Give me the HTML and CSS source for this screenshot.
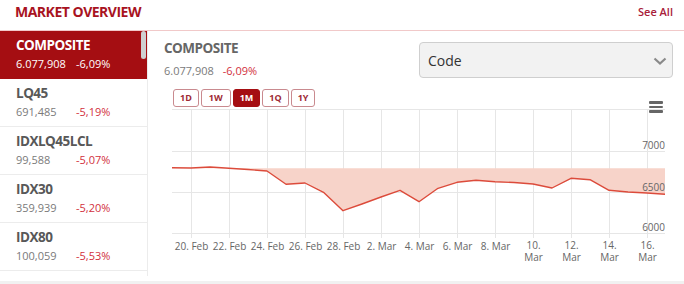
FILE: index.html
```html
<!DOCTYPE html>
<html>
<head>
<meta charset="utf-8">
<link rel="stylesheet" href="styles.css">
</head>
<body>
<div class="widget">
  <div class="header">
    <h2 class="title">MARKET OVERVIEW</h2>
    <a class="see-all">See All</a>
  </div>
  <div class="body">
    <aside class="list">
      <div class="item active">
        <div class="name">COMPOSITE</div>
        <div class="vals"><span class="val">6.077,908</span><span class="pct">-6,09%</span></div>
      </div>
      <div class="item">
        <div class="name">LQ45</div>
        <div class="vals"><span class="val">691,485</span><span class="pct">-5,19%</span></div>
      </div>
      <div class="item">
        <div class="name">IDXLQ45LCL</div>
        <div class="vals"><span class="val">99,588</span><span class="pct">-5,07%</span></div>
      </div>
      <div class="item">
        <div class="name">IDX30</div>
        <div class="vals"><span class="val">359,939</span><span class="pct">-5,20%</span></div>
      </div>
      <div class="item">
        <div class="name">IDX80</div>
        <div class="vals"><span class="val">100,059</span><span class="pct">-5,53%</span></div>
      </div>
      <div class="thumb"></div>
    </aside>
    <section class="detail">
      <div class="detail-head">
        <div class="info">
          <div class="d-name">COMPOSITE</div>
          <div class="d-vals"><span class="d-val">6.077,908</span><span class="d-pct">-6,09%</span></div>
        </div>
        <div class="select">
          <span>Code</span>
          <svg class="chev" width="14" height="8" viewBox="0 0 14 8"><path d="M1.5 1.5 L7 6.5 L12.5 1.5" fill="none" stroke="#8a8a8a" stroke-width="2.2"/></svg>
        </div>
      </div>
      <div class="ranges">
        <div class="btns">
          <span class="btn">1D</span>
          <span class="btn">1W</span>
          <span class="btn on">1M</span>
          <span class="btn">1Q</span>
          <span class="btn">1Y</span>
        </div>
        <div class="menu"><i></i><i></i><i></i></div>
      </div>
      <svg class="chart" width="536" height="170" viewBox="148 107 536 170">
        <g stroke="#e6e6e6" stroke-width="1">
          <line x1="172" y1="109.5" x2="665" y2="109.5"/>
          <line x1="172" y1="151.5" x2="665" y2="151.5"/>
          <line x1="172" y1="192.5" x2="665" y2="192.5"/>
          <line x1="172" y1="233.5" x2="665" y2="233.5"/>
          <line x1="191.5" y1="109" x2="191.5" y2="238"/>
          <line x1="229.5" y1="109" x2="229.5" y2="238"/>
          <line x1="267.5" y1="109" x2="267.5" y2="238"/>
          <line x1="305.5" y1="109" x2="305.5" y2="238"/>
          <line x1="343.5" y1="109" x2="343.5" y2="238"/>
          <line x1="381.5" y1="109" x2="381.5" y2="238"/>
          <line x1="419.5" y1="109" x2="419.5" y2="238"/>
          <line x1="457.5" y1="109" x2="457.5" y2="238"/>
          <line x1="495.5" y1="109" x2="495.5" y2="238"/>
          <line x1="533.5" y1="109" x2="533.5" y2="238"/>
          <line x1="571.5" y1="109" x2="571.5" y2="238"/>
          <line x1="609.5" y1="109" x2="609.5" y2="238"/>
          <line x1="647.5" y1="109" x2="647.5" y2="238"/>
        </g>
        <polygon fill="#f7d3c9" points="172,168.3 191,168.3 210,167.5 229,168.3 248,169.5 267,171 286,184.3 305,183 324,192.7 343,210.7 362,204 381,197 400,190.3 419,201.7 438,188.3 457,182.3 476,180.3 495,181.7 514,182.5 533,184 552,188 571,178.3 590,179.7 609,190.3 628,192 647,193 665,194.3 665,168.3"/>
        <polyline fill="none" stroke="#dc4b3b" stroke-width="1.4" stroke-linejoin="round" points="172,167.7 191,168 210,167 229,168.3 248,169.5 267,171 286,184.3 305,183 324,192.7 343,210.7 362,204 381,197 400,190.3 419,201.7 438,188.3 457,182.3 476,180.3 495,181.7 514,182.5 533,184 552,188 571,178.3 590,179.7 609,190.3 628,192 647,193 665,194.3"/>
        <g class="ylab" text-anchor="end">
          <text x="665" y="149">7000</text>
          <text x="665" y="190.5">6500</text>
          <text x="665" y="231">6000</text>
        </g>
        <g class="xlab" text-anchor="middle">
          <text x="191.5" y="249.5">20. Feb</text>
          <text x="229.5" y="249.5">22. Feb</text>
          <text x="267.5" y="249.5">24. Feb</text>
          <text x="305.5" y="249.5">26. Feb</text>
          <text x="343.5" y="249.5">28. Feb</text>
          <text x="381.5" y="249.5">2. Mar</text>
          <text x="419.5" y="249.5">4. Mar</text>
          <text x="457.5" y="249.5">6. Mar</text>
          <text x="495.5" y="249.5">8. Mar</text>
          <text x="533.5" y="249"><tspan x="533.5">10.</tspan><tspan x="533.5" dy="12">Mar</tspan></text>
          <text x="571.5" y="249"><tspan x="571.5">12.</tspan><tspan x="571.5" dy="12">Mar</tspan></text>
          <text x="609.5" y="249"><tspan x="609.5">14.</tspan><tspan x="609.5" dy="12">Mar</tspan></text>
          <text x="647.5" y="249"><tspan x="647.5">16.</tspan><tspan x="647.5" dy="12">Mar</tspan></text>
        </g>
      </svg>
    </section>
  </div>
</div>
</body>
</html>
```

FILE: styles.css
```css
* { box-sizing: border-box; }
html, body { margin: 0; padding: 0; }
body {
  background: #f1f1f1;
  font-family: "Open Sans", "Liberation Sans", sans-serif;
  width: 684px;
  height: 284px;
  overflow: hidden;
}
.widget {
  background: #fff;
  height: 281px;
  display: flex;
  flex-direction: column;
}
.header {
  height: 31px;
  border-bottom: 1px solid #f1c9c9;
  display: flex;
  justify-content: space-between;
  align-items: flex-start;
  padding: 2px 11px 0 15px;
}
.title {
  margin: 0;
  font-size: 14px;
  line-height: 20px;
  font-weight: 700;
  letter-spacing: -0.5px;
  color: #a8131f;
}
.see-all {
  margin-top: 2px;
  font-size: 11px;
  line-height: 15px;
  font-weight: 600;
  color: #a8203a;
}
.body {
  display: flex;
  flex: 1;
  align-items: flex-start;
}
.list {
  position: relative;
  width: 148px;
  height: 245px;
  border-right: 1px solid #ececec;
  overflow: hidden;
  flex-shrink: 0;
}
.item {
  height: 48px;
  padding: 5px 0 0 16px;
  border-bottom: 1px solid #ececec;
}
.item .name {
  font-size: 13.5px;
  line-height: 19px;
  font-weight: 700;
  letter-spacing: -0.5px;
  color: #585858;
}
.item .vals {
  margin-top: 1px;
  font-size: 11px;
  line-height: 15px;
}
.item .val {
  display: inline-block;
  width: 60px;
  color: #7a7a7a;
}
.item .pct { color: #d2303d; }
.item.active { background: #a50e12; border-bottom-color: #a50e12; }
.item.active .name, .item.active .val, .item.active .pct { color: #fff; }
.thumb {
  position: absolute;
  top: 0;
  right: 1px;
  width: 5px;
  height: 28px;
  border-radius: 3px;
  background: #cfcfcf;
}
.detail {
  flex: 1;
  display: flex;
  flex-direction: column;
}
.detail-head {
  display: flex;
  justify-content: space-between;
  align-items: flex-start;
  padding: 8px 11px 0 16px;
}
.d-name {
  font-size: 13.5px;
  line-height: 19px;
  font-weight: 700;
  letter-spacing: -0.5px;
  color: #666;
}
.d-vals {
  margin-top: 5px;
  font-size: 11px;
  line-height: 15px;
}
.d-val { color: #7a7a7a; margin-right: 9px; }
.d-pct { color: #d2303d; }
.select {
  margin-top: 3px;
  width: 254px;
  height: 36px;
  background: #f2f2f2;
  border: 1px solid #cfcfcf;
  border-radius: 4px;
  display: flex;
  align-items: center;
  justify-content: space-between;
  padding: 0 5px 0 8px;
  font-size: 14px;
  color: #333;
}
.chev { display: block; margin-top: 1px; }
.ranges {
  display: flex;
  align-items: flex-start;
  margin-top: 11px;
  padding-left: 25px;
}
.btns { display: flex; gap: 2px; }
.btn {
  height: 18px;
  padding: 0 6px;
  border: 1px solid #c98a8f;
  border-radius: 3px;
  font-size: 9px;
  font-weight: 700;
  line-height: 16px;
  color: #9e2a35;
  background: #fff;
}
.btn:nth-child(2) { padding: 0 7px; }
.btn.on { background: #a50e12; border-color: #a50e12; color: #fff; }
.menu {
  margin: 12px 21px -6px auto;
  width: 14px;
  display: flex;
  flex-direction: column;
  gap: 2px;
}
.menu i {
  display: block;
  height: 2.5px;
  background: #666;
  border-radius: 1px;
}
.chart { display: block; }
.chart text {
  font-family: "Open Sans", "Liberation Sans", sans-serif;
  font-size: 10px;
  fill: #666;
}
```
